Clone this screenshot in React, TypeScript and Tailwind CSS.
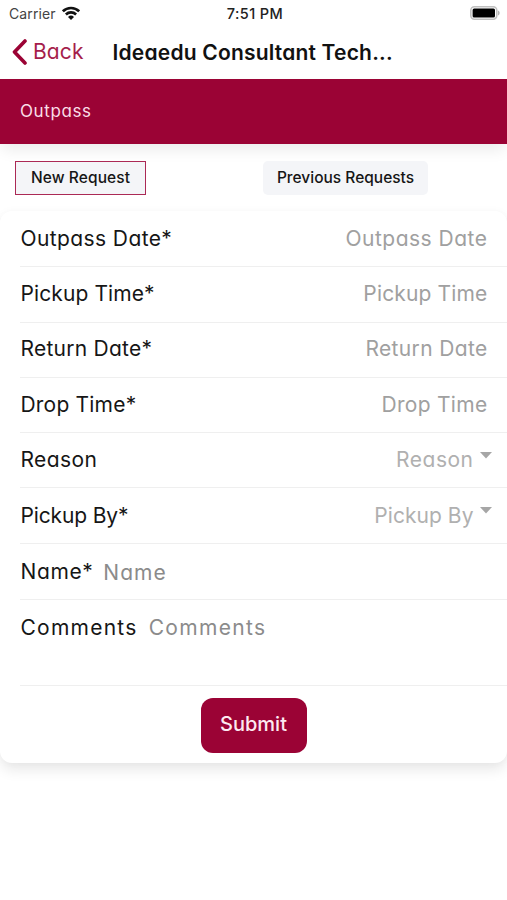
import { ReactNode } from 'react';
import clsx from 'clsx';

interface RowProps {
    label: string;
    className: string;
    labelClass: string;
    children?: ReactNode;
}

function Row({ label, className, labelClass, children }: RowProps) {
    return (
        <div className={clsx('ml-5 flex border-b border-[#efefef] pr-[19.5px]', className)}>
            <label className={clsx('pl-[0.5px] text-[#161616]', labelClass)}>{label}</label>
            {children}
        </div>
    );
}

function Caret() {
    return (
        <svg viewBox="0 0 12 7" className="-mr-1 ml-[6px] mt-[19px] h-[7px] w-3 shrink-0" fill="#a6a6a6">
            <path d="M0 0h12L6 6.5z" />
        </svg>
    );
}

export default function App() {
    return (
        <div className="h-[900px] w-full overflow-hidden bg-white font-['Inter','Liberation_Sans',sans-serif] text-[21px] [font-feature-settings:'cv11']">
            <header className="h-[79px]">
                <div className="grid h-7 grid-cols-3 items-center pl-[9px] pr-[7px] text-[14px] text-[#222] [font-feature-settings:normal]">
                    <div className="-mt-px flex items-center gap-1.5">
                        <span className="tracking-[0.1px] text-[#444]">Carrier</span>
                        <svg viewBox="0 0 18 14" className="-mt-[2px] h-[14px] w-[18px]" fill="none" stroke="#111" strokeWidth="2.6">
                            <path d="M.9 5.3a11.6 11.6 0 0 1 16.2 0" />
                            <path d="M3.9 8.5a7.3 7.3 0 0 1 10.2 0" />
                            <path d="M9 14 6 10.9a4.3 4.3 0 0 1 6 0z" fill="#111" stroke="none" />
                        </svg>
                    </div>
                    <span className="-mr-px text-center text-[14.5px] font-medium tracking-[0.4px]">7:51 PM</span>
                    <svg viewBox="0 0 30 14" className="-mt-[2px] h-[14px] w-[30px] justify-self-end">
                        <rect x=".8" y=".8" width="26" height="12.4" rx="3.6" fill="#fff" stroke="#c0c0c0" strokeWidth="1.6" />
                        <rect x="2.6" y="2.6" width="22.4" height="8.8" rx="1.5" fill="#000" />
                        <path d="M28 4.6c2.2.7 2.2 4.1 0 4.8z" fill="#b5b5b5" />
                    </svg>
                </div>
                <div className="flex h-12 items-center pl-3">
                    <button className="flex items-center gap-1.5 text-[#a51e4b]">
                        <svg viewBox="0 0 15 26" className="h-[26px] w-[15px]" fill="none" stroke="#9b0335" strokeWidth="3.6" strokeLinecap="round" strokeLinejoin="round">
                            <path d="M13 2 2.5 13 13 24" />
                        </svg>
                        <span className="tracking-[0.1px]">Back</span>
                    </button>
                    <h1 className="ml-[29px] whitespace-nowrap pt-px text-[21px] font-semibold tracking-[0.2px] text-[#111]">
                        Ideaedu Consultant Tech...
                    </h1>
                </div>
            </header>

            <div className="h-[65px] bg-[#9b0335] pl-5 text-[17px] leading-[64px] tracking-[0.6px] text-[#fadde7] shadow-[0_8px_14px_-2px_rgba(0,0,0,0.08)]">
                Outpass
            </div>

            <nav className="flex h-[67px] pl-[15px] pt-[17px] text-[15.5px] font-medium text-[#161616]">
                <button className="h-[34px] w-[131px] border-[1.5px] border-[#ab2955] bg-[#f4f5f8] tracking-[0.1px]">New Request</button>
                <button className="ml-[117px] h-[34px] w-[165px] rounded-[5px] bg-[#f4f5f8]">Previous Requests</button>
            </nav>

            <main className="h-[552px] rounded-[12px] bg-white shadow-[0_8px_14px_-1px_rgba(0,0,0,0.09),0_0_8px_rgba(0,0,0,0.03)]">
                <Row label="Outpass Date*" className="h-14 justify-between leading-[56px]" labelClass="tracking-[0.4px]">
                    <span className="tracking-[0.5px] text-[#a0a0a0]">Outpass Date</span>
                </Row>
                <Row label="Pickup Time*" className="h-14 justify-between leading-[54px]" labelClass="tracking-[0.1px]">
                    <span className="tracking-[0.15px] text-[#a0a0a0]">Pickup Time</span>
                </Row>
                <Row label="Return Date*" className="h-[55px] justify-between leading-[52px]" labelClass="tracking-[0.25px]">
                    <span className="tracking-[0.35px] text-[#a0a0a0]">Return Date</span>
                </Row>
                <Row label="Drop Time*" className="h-[55px] justify-between leading-[54px]" labelClass="tracking-[0.2px]">
                    <span className="tracking-[0.3px] text-[#a0a0a0]">Drop Time</span>
                </Row>
                <Row label="Reason" className="h-[55px] leading-[54px]" labelClass="tracking-[0.4px]">
                    <span className="ml-auto tracking-[0.5px] text-[#b0b0b0]">Reason</span>
                    <Caret />
                </Row>
                <Row label="Pickup By*" className="h-14 leading-[55px]" labelClass="tracking-[-0.15px]">
                    <span className="ml-auto tracking-[0.05px] text-[#b0b0b0]">Pickup By</span>
                    <Caret />
                </Row>
                <Row label="Name*" className="h-14 leading-[55px]" labelClass="tracking-[0.6px]">
                    <span className="ml-[10px] pt-px tracking-[1px] text-[#8b8b8b]">Name</span>
                </Row>
                <Row label="Comments" className="h-[86px] leading-[55px]" labelClass="tracking-[1.25px]">
                    <span className="ml-[11px] tracking-[1.35px] text-[#8b8b8b]">Comments</span>
                </Row>
                <div className="flex justify-center pt-3">
                    <button className="h-[55px] w-[106px] rounded-[12px] bg-[#9b0335] pb-[3px] text-[20px] font-medium text-[#fdeaf1]">
                        Submit
                    </button>
                </div>
            </main>
        </div>
    );
}
